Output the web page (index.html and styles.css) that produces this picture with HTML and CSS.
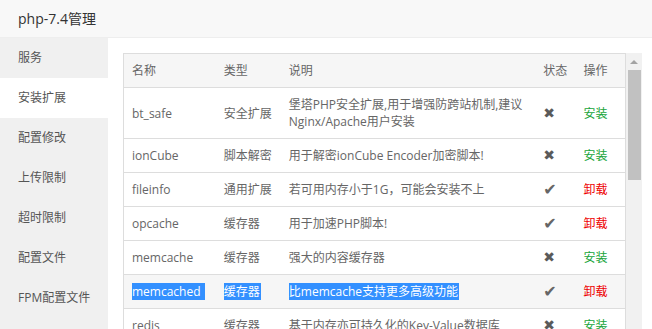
FILE: index.html
```html
<!DOCTYPE html>
<html lang="zh-CN">
<head>
    <meta charset="UTF-8">
    <title>php-7.4管理</title>
    <link rel="stylesheet" href="styles.css">
</head>
<body>
    <div class="layer">
        <div class="layer-title">php-7.4管理</div>
        <div class="layer-body">
            <ul class="side-menu">
                <li>服务</li>
                <li class="active">安装扩展</li>
                <li>配置修改</li>
                <li>上传限制</li>
                <li>超时限制</li>
                <li>配置文件</li>
                <li>FPM配置文件</li>
            </ul>

            <div class="main">
                <div class="table-box">
                    <table class="ext-table">
                        <colgroup>
                            <col class="c-name">
                            <col class="c-type">
                            <col class="c-desc">
                            <col class="c-status">
                            <col class="c-op">
                        </colgroup>
                        <thead>
                            <tr>
                                <th>名称</th>
                                <th>类型</th>
                                <th>说明</th>
                                <th>状态</th>
                                <th>操作</th>
                            </tr>
                        </thead>
                        <tbody>
                            <tr>
                                <td>bt_safe</td>
                                <td>安全扩展</td>
                                <td>堡塔PHP安全扩展,用于增强防跨站机制,建议Nginx/Apache用户安装</td>
                                <td class="status">&#10006;</td>
                                <td><a class="btn-install">安装</a></td>
                            </tr>
                            <tr>
                                <td>ionCube</td>
                                <td>脚本解密</td>
                                <td>用于解密ionCube Encoder加密脚本!</td>
                                <td class="status">&#10006;</td>
                                <td><a class="btn-install">安装</a></td>
                            </tr>
                            <tr>
                                <td>fileinfo</td>
                                <td>通用扩展</td>
                                <td>若可用内存小于1G，可能会安装不上</td>
                                <td class="status ok">&#10004;</td>
                                <td><a class="btn-remove">卸载</a></td>
                            </tr>
                            <tr>
                                <td>opcache</td>
                                <td>缓存器</td>
                                <td>用于加速PHP脚本!</td>
                                <td class="status ok">&#10004;</td>
                                <td><a class="btn-remove">卸载</a></td>
                            </tr>
                            <tr>
                                <td>memcache</td>
                                <td>缓存器</td>
                                <td>强大的内容缓存器</td>
                                <td class="status">&#10006;</td>
                                <td><a class="btn-install">安装</a></td>
                            </tr>
                            <tr class="hover">
                                <td><span class="sel sel-name">memcached</span></td>
                                <td><span class="sel">缓存器</span></td>
                                <td><span class="sel">比memcache支持更多高级功能</span></td>
                                <td class="status ok">&#10004;</td>
                                <td><a class="btn-remove">卸载</a></td>
                            </tr>
                            <tr>
                                <td>redis</td>
                                <td>缓存器</td>
                                <td>基于内存亦可持久化的Key-Value数据库</td>
                                <td class="status">&#10006;</td>
                                <td><a class="btn-install">安装</a></td>
                            </tr>
                        </tbody>
                    </table>
                </div>
                <div class="scrollbar">
                    <span class="arrow-up"></span>
                    <span class="thumb"></span>
                </div>
            </div>
        </div>
    </div>
</body>
</html>
```

FILE: styles.css
```css
* {
    margin: 0;
    padding: 0;
    box-sizing: border-box;
}

body {
    background-color: #fff;
    font-family: "Open Sans", "Noto Sans CJK SC", sans-serif;
    font-size: 12px;
    color: #666;
    overflow: hidden;
}

.layer {
    width: 652px;
    height: 329px;
}

.layer-title {
    height: 38px;
    line-height: 37px;
    padding-left: 18px;
    background-color: #f8f8f8;
    border-bottom: 1px solid #eee;
    font-size: 14px;
    color: #333;
}

.layer-body {
    display: flex;
    height: 291px;
}

.side-menu {
    list-style: none;
    width: 108px;
    background-color: #f0f0f0;
}

.side-menu li {
    height: 40px;
    line-height: 40px;
    padding-left: 18px;
    color: #555;
}

.side-menu li.active {
    background-color: #fff;
}

.main {
    display: flex;
    padding: 15px 10px 0 15px;
    overflow: hidden;
}

.table-box {
    width: 503px;
    overflow: hidden;
}

.ext-table {
    width: 503px;
    border-collapse: collapse;
    table-layout: fixed;
    border: 1px solid #ddd;
}

.c-name { width: 92px; }
.c-type { width: 65px; }
.c-desc { width: 254px; }
.c-status { width: 40px; }
.c-op { width: 50px; }

.ext-table th,
.ext-table td {
    padding: 8px;
    line-height: 17px;
    text-align: left;
    font-weight: normal;
    border-bottom: 1px solid #ddd;
    vertical-align: middle;
}

.ext-table th {
    background-color: #f6f6f6;
    color: #666;
}

.ext-table tr.hover td {
    background-color: #f6f6f6;
}

.ext-table .status {
    font-family: "DejaVu Sans", sans-serif;
    color: #5a5a5a;
    font-size: 14px;
}

.ext-table .status.ok {
    font-size: 16px;
    color: #666;
}

.sel {
    background-color: #3390ff;
    color: #fff;
    padding: 0 1px 0 0;
}

.sel-name {
    padding-right: 4px;
}

.btn-install {
    color: #20a53a;
}

.btn-remove {
    color: #e00;
}

.scrollbar {
    position: relative;
    width: 16px;
    background-color: #f1f1f1;
    flex-shrink: 0;
}

.arrow-up {
    position: absolute;
    top: 7px;
    left: 4px;
    width: 0;
    height: 0;
    border-left: 4px solid transparent;
    border-right: 4px solid transparent;
    border-bottom: 4px solid #a3a3a3;
}

.thumb {
    position: absolute;
    top: 17px;
    left: 2px;
    width: 13px;
    height: 110px;
    background-color: #c1c1c1;
}
```
